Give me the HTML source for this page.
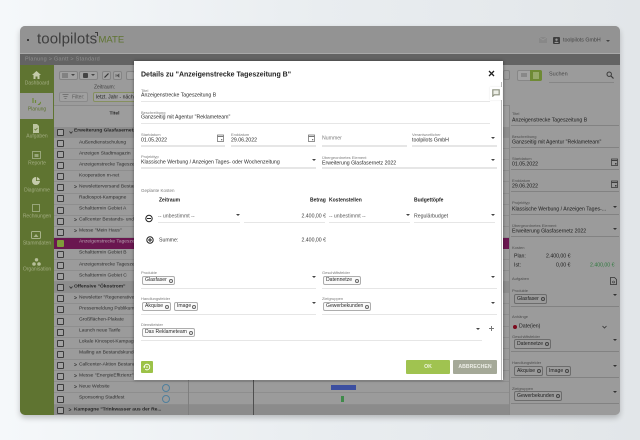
<!DOCTYPE html>
<html lang="de"><head><meta charset="utf-8"><title>toolpilots MATE</title>
<style>
html,body{margin:0;padding:0;width:640px;height:440px;overflow:hidden}
#p{position:absolute;left:0;top:0;width:640px;height:440px;overflow:hidden;background:linear-gradient(90deg,#f5f8fa 0%,#e9edf0 50%,#e2e6e9 100%);font-family:"Liberation Sans",sans-serif;filter:blur(.35px)}
#w{position:absolute;left:20px;top:26px;width:600px;height:389px;border-radius:5px;overflow:hidden;background:#9b9b9b}
#s{position:absolute;left:20px;top:26px;width:600px;height:389px;border-radius:5px;box-shadow:0 3px 6px rgba(0,0,0,.22)}
.a{position:absolute}
.t{position:absolute;white-space:nowrap;line-height:1;transform:translateY(-50%)}
/* table rows */
.r{position:absolute;left:54px;width:455px;height:11px;border-bottom:1px solid #8e8e8e;box-sizing:border-box}
.c{position:absolute;left:57px;width:7px;height:7px;border:1px solid #3c3c3c;border-radius:1px;box-sizing:border-box;background:#a2a2a2}
.x{position:absolute;white-space:nowrap;font-size:4.9px;color:#2f2f2f;line-height:1;transform:translateY(-50%);left:79px}
.g{position:absolute;white-space:nowrap;font-size:4.9px;font-weight:bold;color:#262626;line-height:1;transform:translateY(-50%)}
.ar{position:absolute;font-size:5px;font-weight:bold;color:#2e2e2e;line-height:1;transform:translateY(-50%);left:74px}
.sl{position:absolute;left:20px;width:34px;text-align:center;font-size:5px;color:#a3ad83;line-height:1;transform:translateY(-50%)}
.si{position:absolute}
/* panel */
.pl{position:absolute;left:512px;font-size:4px;color:#4d4d4d;line-height:1;white-space:nowrap;transform:translateY(-50%)}
.pv{position:absolute;left:512px;font-size:5.2px;color:#1c1c1c;line-height:1;white-space:nowrap;transform:translateY(-50%)}
.pu{position:absolute;left:511px;width:108px;height:1px;background:#828282}
.pc{position:absolute;box-sizing:border-box;border:1px solid #6c6c6c;border-radius:2px;font-size:5.1px;color:#1f1f1f;line-height:8px;padding-left:2px;white-space:nowrap}
/* modal */
#m{position:absolute;left:134px;top:61px;width:369px;height:319px;background:#fff;box-shadow:0 0 3px rgba(0,0,0,.45);overflow:hidden}
.l{position:absolute;font-size:4px;color:#7c7c7c;line-height:1;white-space:nowrap;transform:translateY(-50%)}
.v{position:absolute;font-size:5.2px;color:#2a2a2a;line-height:1;white-space:nowrap;transform:translateY(-50%)}
.u{position:absolute;height:1.5px;background:#e6e6e6}
.h{position:absolute;font-size:5px;font-weight:bold;color:#1c1c1c;line-height:1;white-space:nowrap;transform:translateY(-50%)}
.ca{position:absolute;width:0;height:0;border-left:2px solid transparent;border-right:2px solid transparent;border-top:2.5px solid #444}
.ch{position:absolute;box-sizing:border-box;height:9px;border:1px solid #adadad;border-radius:2px;font-size:5.1px;color:#2a2a2a;line-height:7.500px;padding-left:2px;white-space:nowrap;background:#fafafa}
.ch i{position:absolute;right:1.5px;top:1.5px;width:4px;height:4px;border:.8px solid #666;border-radius:50%;box-sizing:border-box}
.pc i{position:absolute;right:1.5px;top:2px;width:4px;height:4px;border:.8px solid #444;border-radius:50%;box-sizing:border-box}
.tb{position:absolute;top:71px;height:9px;box-sizing:border-box;border:1px solid #848484;border-radius:2px;background:#a2a2a2}
</style></head><body>
<div id="p">
<div id="s"></div>
<div id="w"></div>

<!-- header -->
<div class="a" style="left:20px;top:26px;width:600px;height:27px;background:#939393;border-radius:5px 5px 0 0"></div>
<div class="a" style="left:20px;top:53px;width:600px;height:1px;background:#a9a9a9"></div>
<div class="a" style="left:20px;top:54px;width:600px;height:11px;background:#636363"></div>
<div class="t" style="left:25px;top:60px;font-size:5.5px;letter-spacing:.25px;color:#8f8f8f">Planung &gt; Gantt &gt; Standard</div>
<div class="a" style="left:27px;top:39px;width:2px;height:2px;border-radius:50%;background:#222"></div>
<div class="t" style="left:37px;top:39px;font-size:15px;color:#3e3e3e;letter-spacing:.1px">toolpilots</div>
<div class="a" style="left:95px;top:32px;width:2px;height:3px;border-top:1px solid #3e3e3e;border-right:1px solid #3e3e3e"></div>
<div class="t" style="left:98.500px;top:40px;font-size:9.500px;color:#5f7430">MATE</div>
<svg class="a" style="left:539px;top:37px" width="8" height="6"><rect width="8" height="6" fill="#888"/><path d="M0 0l4 3 4-3" stroke="#9c9c9c" stroke-width=".6" fill="none"/></svg>
<svg class="a" style="left:553px;top:37px" width="7" height="7"><rect width="7" height="7" rx="1" fill="#3e3e3e"/><circle cx="3.500" cy="2.700" r="1.200" fill="#999"/><path d="M1.300 6c.3-1.600 4-1.600 4.400 0z" fill="#999"/></svg>
<div class="t" style="left:563px;top:40.500px;font-size:5.300px;color:#444">toolpilots GmbH</div>
<div class="ca" style="left:606px;top:40px"></div>

<!-- toolbar -->
<div class="tb" style="left:59px;width:19px"></div>
<div class="tb" style="left:79px;width:19px"></div>
<div class="a" style="left:83px;top:73px;width:5px;height:5px;background:#444;border-radius:1px"></div>
<div class="a" style="left:62px;top:73px;width:6px;height:5px;background:#828282"></div>
<div class="ca" style="left:71px;top:74px"></div>
<div class="ca" style="left:91px;top:74px"></div>
<div class="tb" style="left:102px;width:9px"></div>
<svg class="a" style="left:103px;top:72px" width="7" height="7"><path d="M1.500 5.500L5.500 1.500" stroke="#333" stroke-width="1.200"/></svg>
<div class="tb" style="left:113px;width:9px"></div>
<div class="tb" style="left:126px;width:9px"></div>
<svg class="a" style="left:114px;top:72px" width="7" height="7"><path d="M2 2v3M5 2L3 3.500 5 5z" stroke="#555" stroke-width=".7" fill="#555"/></svg>
<div class="a" style="left:59px;top:92px;width:29px;height:10px;box-sizing:border-box;border:1px solid #8a8a8a;border-radius:2px;background:#a0a0a0"></div>
<svg class="a" style="left:62px;top:94px" width="7" height="6"><path d="M.5.500h6M1.500 2.500h4M2.500 4.500h2" stroke="#666" stroke-width=".8"/></svg>
<div class="t" style="left:72px;top:97.500px;font-size:5px;color:#5a5a5a">Filter:</div>
<div class="t" style="left:94px;top:88px;font-size:5px;color:#3f3f3f">Zeitraum:</div>
<div class="a" style="left:93px;top:92px;width:50px;height:10px;box-sizing:border-box;border:1px solid #86905f;border-radius:2px;background:#a1a1a1"></div>
<div class="t" style="left:96px;top:97.500px;font-size:5.100px;color:#222">letzt. Jahr - nächst</div>

<!-- table -->
<div class="a" style="left:54px;top:105px;width:455px;height:22px;background:#9d9d9d;border-top:1px solid #8a8a8a;box-sizing:border-box"></div>
<div class="t" style="left:109.500px;top:115px;font-size:4.900px;font-weight:bold;color:#2a2a2a">Titel</div>

<div class="r" style="top:127px;background:#8d8d8d"></div>
<div class="r" style="top:138px"></div><div class="r" style="top:149px"></div><div class="r" style="top:160px"></div><div class="r" style="top:171px"></div><div class="r" style="top:183px"></div><div class="r" style="top:194px"></div><div class="r" style="top:205px"></div><div class="r" style="top:216px"></div><div class="r" style="top:227px"></div>
<div class="r" style="top:238px;background:#6a1650;border:0"></div>
<div class="r" style="top:249px"></div><div class="r" style="top:260px"></div><div class="r" style="top:271px"></div>
<div class="r" style="top:282px;background:#8d8d8d"></div>
<div class="r" style="top:293px"></div><div class="r" style="top:304px"></div><div class="r" style="top:316px"></div><div class="r" style="top:327px"></div><div class="r" style="top:338px"></div><div class="r" style="top:349px"></div><div class="r" style="top:360px"></div><div class="r" style="top:371px"></div><div class="r" style="top:382px"></div><div class="r" style="top:394px"></div>
<div class="r" style="top:405px;height:10px;background:#8b8b8b;border:0"></div>

<div class="c" style="top:129px"></div><svg class="a" style="left:68.500px;top:130.500px" width="4" height="3"><path d="M.5.500L2 2.300 3.500.5" stroke="#2e2e2e" stroke-width=".8" fill="none"/></svg><div class="g" style="left:74px;top:132px">Erweiterung Glasfasernetz</div>
<div class="c" style="top:140px"></div><div class="x" style="top:143.500px">Außendienstschulung</div>
<div class="c" style="top:151px"></div><div class="x" style="top:154.500px">Anzeigen Stadtmagazin</div>
<div class="c" style="top:162px"></div><div class="x" style="top:165.700px">Anzeigenstrecke Tageszeitung</div>
<div class="c" style="top:173px"></div><div class="x" style="top:176.800px">Kooperation m-net</div>
<div class="c" style="top:184px"></div><div class="ar" style="top:188px">&gt;</div><div class="x" style="top:188px">Newsletterversand Bestandskunden</div>
<div class="c" style="top:195px"></div><div class="x" style="top:199px">Radiospot-Kampagne</div>
<div class="c" style="top:207px"></div><div class="x" style="top:210px">Schalttermin Gebiet A</div>
<div class="c" style="top:218px"></div><div class="ar" style="top:221px">&gt;</div><div class="x" style="top:221px">Callcenter Bestands- und Neukunden</div>
<div class="c" style="top:229px"></div><div class="ar" style="top:232px">&gt;</div><div class="x" style="top:232px">Messe "Mein Haus"</div>
<div class="a" style="left:57px;top:240px;width:7px;height:7px;background:#7f9b3a;border-radius:1px"></div><div class="x" style="top:243px;color:#b8a4b2">Anzeigenstrecke Tageszeitung</div>
<div class="c" style="top:251px"></div><div class="x" style="top:254px">Schalttermin Gebiet B</div>
<div class="c" style="top:262px"></div><div class="x" style="top:265.500px">Anzeigenstrecke Tageszeitung</div>
<div class="c" style="top:273px"></div><div class="x" style="top:276.600px">Schalttermin Gebiet C</div>
<div class="c" style="top:284px"></div><svg class="a" style="left:68.500px;top:286px" width="4" height="3"><path d="M.5.500L2 2.300 3.500.5" stroke="#2e2e2e" stroke-width=".8" fill="none"/></svg><div class="g" style="left:74px;top:287.700px">Offensive "Ökostrom"</div>
<div class="c" style="top:295px"></div><div class="ar" style="top:299px">&gt;</div><div class="x" style="top:299px">Newsletter "Regenerative Energien"</div>
<div class="c" style="top:306px"></div><div class="x" style="top:310px">Pressemeldung Publikumspresse</div>
<div class="c" style="top:318px"></div><div class="x" style="top:321px">Großflächen-Plakate</div>
<div class="c" style="top:329px"></div><div class="x" style="top:332px">Launch neue Tarife</div>
<div class="c" style="top:340px"></div><div class="x" style="top:343px">Lokale Kinospot-Kampagne</div>
<div class="c" style="top:351px"></div><div class="x" style="top:354px">Mailing an Bestandskunden</div>
<div class="c" style="top:362px"></div><div class="ar" style="top:365.500px">&gt;</div><div class="x" style="top:365.500px">Callcenter-Aktion Bestandskunden</div>
<div class="c" style="top:373px"></div><div class="ar" style="top:377px">&gt;</div><div class="x" style="top:376.700px">Messe "EnergieEffizienz"</div>
<div class="c" style="top:384px"></div><div class="ar" style="top:388px">&gt;</div><div class="x" style="top:388px">Neue Website</div>
<div class="c" style="top:396px"></div><div class="x" style="top:399px">Sponsoring Stadtfest</div>
<div class="c" style="top:407px"></div><div class="ar" style="left:68.500px;top:410.500px">&gt;</div><div class="g" style="left:74px;top:410.500px">Kampagne "Trinkwasser aus der Re...</div>

<!-- gantt remains -->
<div class="a" style="left:162px;top:384px;width:8px;height:8px;box-sizing:border-box;border:1.200px solid #4f7f9c;border-radius:50%"></div>
<div class="a" style="left:162px;top:395px;width:8px;height:8px;box-sizing:border-box;border:1.200px solid #4f7f9c;border-radius:50%"></div>
<div class="a" style="left:188px;top:380px;width:1px;height:35px;background:#7e7e7e"></div>
<div class="a" style="left:253px;top:380px;width:1px;height:35px;background:#4e4e4e"></div>
<div class="a" style="left:331px;top:385px;width:25px;height:5px;background:#3c4fa0"></div>
<div class="a" style="left:341px;top:396px;width:3px;height:6px;background:#3f8a4a"></div>
<div class="a" style="left:509px;top:105px;width:111px;height:310px;background:#9b9b9b;border-radius:0 0 5px 0"></div>
<div class="a" style="left:509px;top:105px;width:1px;height:310px;background:#888"></div>

<!-- right top -->
<div class="a" style="left:503px;top:70px;width:7px;height:10px;box-sizing:border-box;border:1px solid #848484;border-radius:2px"></div>
<div class="a" style="left:517px;top:70px;width:25px;height:11px;box-sizing:border-box;border:1px solid #878787;border-radius:2px;background:#a3a3a3"></div>
<div class="a" style="left:530px;top:70px;width:12px;height:11px;background:#6f8a35;border-radius:0 2px 2px 0"></div>
<div class="a" style="left:521px;top:73px;width:6px;height:4px;background:#888"></div>
<div class="a" style="left:533px;top:72px;width:6px;height:7px;background:#97a96a"></div>
<div class="t" style="left:549px;top:75px;font-size:5.500px;color:#484848">Suchen</div>
<div class="a" style="left:549px;top:82px;width:65px;height:1px;background:#868686"></div>
<svg class="a" style="left:606px;top:71px" width="8" height="8"><circle cx="3.200" cy="3.200" r="2.200" stroke="#3a3a3a" fill="none"/><path d="M5 5l2.500 2.500" stroke="#3a3a3a" stroke-width="1.200"/></svg>

<!-- sidebar -->
<div class="a" style="left:20px;top:65px;width:34px;height:350px;background:#5f7431;border-radius:0 0 0 5px"></div>
<div class="a" style="left:20px;top:93px;width:33px;height:26px;background:#9c9c9c"></div>
<svg class="si" style="left:32px;top:71px" width="9" height="8"><path d="M4.500 0L9 4H7.500v4H5.500V5.500h-2V8H1.500V4H0z" fill="#c4cbaa"/></svg>
<div class="sl" style="top:83.500px">Dashboard</div>
<svg class="si" style="left:32px;top:97px" width="9" height="8"><path d="M1 1v5M3.500 3v3M6 7l1 1 2-3" stroke="#6e8a38" stroke-width="1.200" fill="none"/></svg>
<div class="sl" style="top:110px;color:#5f7431">Planung</div>
<svg class="si" style="left:32px;top:124px" width="8" height="9"><path d="M1 0h4l2 2v7H1z" fill="#bcc4a0"/><path d="M2.500 5l1 1 2-2" stroke="#5f7431" stroke-width=".8" fill="none"/></svg>
<div class="sl" style="top:137px">Aufgaben</div>
<svg class="si" style="left:32px;top:151px" width="9" height="8"><rect x=".5" y=".5" width="8" height="7" fill="none" stroke="#98a67a"/><rect x="2.500" y="3" width="4" height="3" fill="#98a67a"/></svg>
<div class="sl" style="top:163.500px">Reporte</div>
<svg class="si" style="left:32px;top:177px" width="8" height="8"><circle cx="4" cy="4" r="4" fill="#c4cbaa"/><path d="M4 4V0h.8v3.200H8v.8z" fill="#5f7431"/></svg>
<div class="sl" style="top:190.500px">Diagramme</div>
<svg class="si" style="left:32px;top:204px" width="8" height="8"><rect x=".5" y=".5" width="7" height="7" fill="none" stroke="#98a67a"/></svg>
<div class="sl" style="top:217px">Rechnungen</div>
<svg class="si" style="left:31px;top:231px" width="10" height="8"><rect x=".5" y=".5" width="9" height="7" rx="1" fill="none" stroke="#a8b38a"/><path d="M2.500 6L5 3l2.500 3z" fill="#a8b38a"/></svg>
<div class="sl" style="top:244px">Stammdaten</div>
<svg class="si" style="left:32px;top:258px" width="9" height="8"><circle cx="4.500" cy="1.800" r="1.700" fill="#b6bf99"/><circle cx="2" cy="6" r="1.800" fill="#b6bf99"/><circle cx="7" cy="6" r="1.800" fill="#b6bf99"/></svg>
<div class="sl" style="top:270px">Organisation</div>

<!-- right panel -->
<div class="pl" style="top:114px">Titel</div><div class="pv" style="top:120.500px">Anzeigenstrecke Tageszeitung B</div><div class="pu" style="top:125px"></div>
<div class="pl" style="top:137px">Beschreibung</div><div class="pv" style="top:143px">Ganzseitig mit Agentur "Reklameteam"</div><div class="pu" style="top:147px"></div>
<div class="pl" style="top:159px">Startdatum</div><div class="pv" style="top:165px">01.05.2022</div><div class="pu" style="top:169px"></div>
<svg class="a" style="left:611px;top:158px" width="7" height="8"><rect x=".5" y="1" width="6" height="6.500" fill="none" stroke="#3e3e3e" stroke-width=".8"/><path d="M.5 2.500h6" stroke="#3e3e3e"/><rect x="4" y="5" width="1.500" height="1.500" fill="#3e3e3e"/></svg>
<div class="pl" style="top:181px">Enddatum</div><div class="pv" style="top:187px">29.06.2022</div><div class="pu" style="top:191px"></div>
<svg class="a" style="left:611px;top:180px" width="7" height="8"><rect x=".5" y="1" width="6" height="6.500" fill="none" stroke="#3e3e3e" stroke-width=".8"/><path d="M.5 2.500h6" stroke="#3e3e3e"/><rect x="4" y="5" width="1.500" height="1.500" fill="#3e3e3e"/></svg>
<div class="pl" style="top:203px">Projekttyp</div><div class="pv" style="top:209.500px">Klassische Werbung / Anzeigen Tages-...</div><div class="pu" style="top:213.500px"></div><div class="ca" style="left:613px;top:206px;border-top-color:#333"></div>
<div class="pl" style="top:226px">Übergeordnetes Element</div><div class="pv" style="top:232px">Erweiterung Glasfasernetz 2022</div><div class="pu" style="top:236px"></div><div class="ca" style="left:613px;top:228px;border-top-color:#333"></div>
<div class="pl" style="top:248px">Kosten</div>
<div class="pv" style="left:514px;top:257px">Plan:</div><div class="pv" style="left:546px;top:257px">2.400,00 €</div>
<div class="pv" style="left:514px;top:266px">Ist:</div><div class="pv" style="left:556px;top:266px">0,00 €</div>
<div class="pv" style="left:590px;top:266px;color:#2f7a3e">2.400,00 €</div>
<div class="pl" style="top:278.500px">Aufgaben</div>
<svg class="a" style="left:610px;top:277px" width="7" height="8"><path d="M.5.500h4l2 2v5h-6z" fill="none" stroke="#333" stroke-width=".8"/><circle cx="3.500" cy="5" r="1" fill="none" stroke="#333" stroke-width=".6"/></svg>
<div class="pl" style="top:291px">Produkte</div><div class="pc" style="left:514px;top:294px;width:33px;height:10px">Glasfaser<i></i></div><div class="pu" style="top:305.500px"></div><div class="ca" style="left:613px;top:294px;border-top-color:#333"></div>
<div class="pl" style="top:317px">Anhänge</div>
<div class="a" style="left:513px;top:325px;width:4px;height:4px;border-radius:50%;background:#7d0a1d"></div>
<div class="pv" style="left:519px;top:327px">Date(ien)</div>
<svg class="a" style="left:602px;top:325px" width="5" height="4"><path d="M.5 1l2 2 2-2" stroke="#333" fill="none" stroke-width=".8"/></svg>
<div class="pl" style="top:336.500px">Geschäftsfelder</div><div class="pc" style="left:514px;top:339px;width:37px;height:10px">Datennetze<i></i></div><div class="pu" style="top:351px"></div><div class="ca" style="left:613px;top:339px;border-top-color:#333"></div>
<div class="pl" style="top:363px">Handlungsfelder</div><div class="pc" style="left:514px;top:366px;width:29px;height:10px">Akquise<i></i></div><div class="pc" style="left:546px;top:366px;width:25px;height:10px">Image<i></i></div><div class="pu" style="top:377px"></div><div class="ca" style="left:613px;top:365px;border-top-color:#333"></div>
<div class="pl" style="top:389px">Zielgruppen</div><div class="pc" style="left:514px;top:391px;width:48px;height:10px">Gewerbekunden<i></i></div><div class="pu" style="top:403px"></div><div class="ca" style="left:613px;top:391px;border-top-color:#333"></div>

<!-- modal -->
<div id="m">
<div class="t" style="left:7px;top:13.500px;font-size:7px;font-weight:bold;color:#222">Details zu "Anzeigenstrecke Tageszeitung B"</div>
<svg class="a" style="left:354px;top:9px" width="7" height="7"><path d="M1 1l5 5M6 1L1 6" stroke="#222" stroke-width="1.300"/></svg>
<div class="a" style="left:367px;top:21px;width:1px;height:298px;background:#b8b8b8"></div>
<div class="a" style="left:356px;top:26px;width:12px;height:13px;background:#fff;box-shadow:0 0 1.500px rgba(0,0,0,.12)"></div>
<svg class="a" style="left:358px;top:28px" width="8" height="8"><path d="M.8.800h6.400v5H2.300L.8 7.200z" fill="#eceee6" stroke="#8e9280" stroke-width="1.200"/></svg>

<div class="l" style="left:7px;top:29.500px">Titel</div><div class="v" style="left:7px;top:35px">Anzeigenstrecke Tageszeitung B</div><div class="u" style="left:7px;top:39.500px;width:349px"></div>
<div class="l" style="left:7px;top:52px">Beschreibung</div><div class="v" style="left:7px;top:57px">Ganzseitig mit Agentur "Reklameteam"</div><div class="u" style="left:7px;top:61.500px;width:349px"></div>

<div class="l" style="left:7px;top:73.500px">Startdatum</div><div class="v" style="left:7px;top:79.500px">01.05.2022</div><div class="u" style="left:7px;top:84px;width:84px"></div>
<svg class="a" style="left:83px;top:73px" width="7" height="8"><rect x=".5" y="1" width="6" height="6.500" fill="none" stroke="#777" stroke-width=".8"/><path d="M.5 2.500h6" stroke="#777"/><rect x="4" y="5" width="1.300" height="1.300" fill="#777"/></svg>
<div class="l" style="left:97px;top:73.500px">Enddatum</div><div class="v" style="left:97px;top:79.500px">29.06.2022</div><div class="u" style="left:97px;top:84px;width:85px"></div>
<svg class="a" style="left:174px;top:73px" width="7" height="8"><rect x=".5" y="1" width="6" height="6.500" fill="none" stroke="#777" stroke-width=".8"/><path d="M.5 2.500h6" stroke="#777"/><rect x="4" y="5" width="1.300" height="1.300" fill="#777"/></svg>
<div class="v" style="left:188px;top:77.500px;color:#7c7c7c">Nummer</div><div class="u" style="left:188px;top:84px;width:85px"></div>
<div class="l" style="left:278px;top:73.500px">Verantwortlicher</div><div class="v" style="left:278px;top:79.500px">toolpilots GmbH</div><div class="u" style="left:278px;top:84px;width:85px"></div><div class="ca" style="left:357px;top:76px"></div>

<div class="l" style="left:7px;top:95.500px">Projekttyp</div><div class="v" style="left:7px;top:102px">Klassische Werbung / Anzeigen Tages- oder Wochenzeitung</div><div class="u" style="left:7px;top:106px;width:175px"></div><div class="ca" style="left:178px;top:98px"></div>
<div class="l" style="left:188px;top:96.500px">Übergeordnetes Element</div><div class="v" style="left:188px;top:102.500px">Erweiterung Glasfasernetz 2022</div><div class="u" style="left:188px;top:106px;width:175px"></div><div class="ca" style="left:357px;top:98px"></div>

<div class="l" style="left:7px;top:129.500px;font-size:4.500px">Geplante Kosten</div>
<div class="h" style="left:25px;top:139.500px">Zeitraum</div><div class="h" style="left:176px;top:139.500px">Betrag</div><div class="h" style="left:195px;top:139.500px">Kostenstellen</div><div class="h" style="left:280px;top:139.500px">Budgettöpfe</div>

<svg class="a" style="left:11px;top:153px" width="8" height="9"><circle cx="4" cy="4.500" r="3.200" fill="none" stroke="#222"/><path d="M2 4.500h4" stroke="#222"/></svg>
<div class="v" style="left:24px;top:155.500px;color:#5a5a5a">-- unbestimmt --</div><div class="u" style="left:24px;top:160.500px;width:82px"></div><div class="ca" style="left:102px;top:153px"></div>
<div class="u" style="left:110px;top:160.500px;width:81px"></div><div class="v" style="left:162px;top:155.500px;color:#444;width:30px;text-align:right">2.400,00 €</div>
<div class="v" style="left:195px;top:155.500px;color:#5a5a5a">-- unbestimmt --</div><div class="u" style="left:195px;top:160.500px;width:81px"></div><div class="ca" style="left:272px;top:153px"></div>
<div class="v" style="left:280px;top:155.500px;color:#444">Regulärbudget</div><div class="u" style="left:280px;top:160.500px;width:81px"></div><div class="ca" style="left:357px;top:153px"></div>

<svg class="a" style="left:12px;top:175px" width="8" height="8"><circle cx="4" cy="4" r="3.200" fill="none" stroke="#222"/><path d="M2 4h4M4 2v4" stroke="#222"/></svg>
<div class="v" style="left:25px;top:179.500px;color:#3a3a3a">Summe:</div><div class="v" style="left:162px;top:179.500px;color:#3a3a3a;width:30px;text-align:right">2.400,00 €</div>

<div class="l" style="left:7px;top:212px">Produkte</div><div class="ch" style="left:8px;top:215px;width:33px">Glasfaser<i></i></div><div class="u" style="left:7px;top:226.500px;width:175px"></div><div class="ca" style="left:178px;top:215px"></div>
<div class="l" style="left:188px;top:212px">Geschäftsfelder</div><div class="ch" style="left:189px;top:215px;width:38px">Datennetze<i></i></div><div class="u" style="left:188px;top:226.500px;width:175px"></div><div class="ca" style="left:357px;top:215px"></div>
<div class="l" style="left:7px;top:238px">Handlungsfelder</div><div class="ch" style="left:8px;top:241px;width:29px">Akquise<i></i></div><div class="ch" style="left:40px;top:241px;width:24px">Image<i></i></div><div class="u" style="left:7px;top:252.500px;width:175px"></div><div class="ca" style="left:178px;top:241px"></div>
<div class="l" style="left:188px;top:238px">Zielgruppen</div><div class="ch" style="left:189px;top:241px;width:48px">Gewerbekunden<i></i></div><div class="u" style="left:188px;top:252.500px;width:175px"></div><div class="ca" style="left:357px;top:241px"></div>
<div class="l" style="left:7px;top:264px">Dienstleister</div><div class="ch" style="left:8px;top:267px;width:53px">Das Reklameteam<i></i></div><div class="u" style="left:7px;top:278.500px;width:341px"></div><div class="ca" style="left:342px;top:267px"></div>
<svg class="a" style="left:354px;top:264px" width="7" height="7"><path d="M3.500 1v5M1 3.500h5" stroke="#777"/></svg>

<div class="a" style="left:7px;top:300px;width:12px;height:12px;background:#9cc248;border-radius:1px"></div>
<svg class="a" style="left:9px;top:302px" width="8" height="8"><path d="M1.200 4a2.800 2.800 0 1 1 1 2.200" fill="none" stroke="#fff" stroke-width=".9"/><path d="M0 3.500h2.500L1.200 5.200z" fill="#fff"/><circle cx="4" cy="4" r=".8" fill="#fff"/></svg>
<div class="a" style="left:272px;top:299px;width:44px;height:14px;background:#a0c350;border-radius:1px;color:#eef4dc;font-size:5.200px;font-weight:bold;text-align:center;line-height:14px">OK</div>
<div class="a" style="left:319px;top:299px;width:44px;height:14px;background:#a5a998;border-radius:1px;color:#ecede6;font-size:5.200px;font-weight:bold;text-align:center;line-height:14px">ABBRECHEN</div>
</div>
</div>
</body></html>
